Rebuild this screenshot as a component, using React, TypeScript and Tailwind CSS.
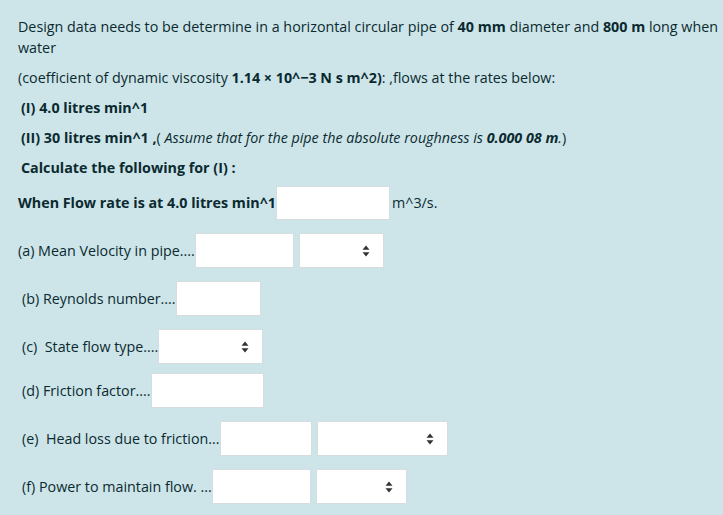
import React from "react";

function Arrows() {
  return (
    <svg width="8" height="12" viewBox="0 0 8 12" className="shrink-0">
      <path d="M4 0.5 L7.5 4.8 H0.5 Z" fill="#333" />
      <path d="M4 11.5 L7.5 7.2 H0.5 Z" fill="#333" />
    </svg>
  );
}

function Box({ w }: { w: number }) {
  return (
    <div
      className="h-[35px] bg-white border border-[#d6dde0] shrink-0"
      style={{ width: w }}
    />
  );
}

function Select({ w }: { w: number }) {
  return (
    <div
      className="h-[35px] bg-white border border-[#d6dde0] shrink-0 flex items-center justify-end pr-[13px]"
      style={{ width: w }}
    >
      <Arrows />
    </div>
  );
}

function Row({ children, mt = "mt-[13px]" }: { children: React.ReactNode; mt?: string }) {
  return <div className={`flex items-center ${mt}`}>{children}</div>;
}

export default function App() {
  return (
    <div
      className="w-[723px] h-[515px] overflow-hidden bg-[#cde5e9] text-[#0b2a30] text-[14.3px] pl-[18px] pt-[16px]"
      style={{ fontFamily: '"Open Sans", "Noto Sans", sans-serif' }}
    >
      <p className="leading-[21px] whitespace-nowrap">
        Design data needs to be determine in a horizontal circular pipe of <b>40 mm</b> diameter and{" "}
        <b>800 m</b> long when
        <br />
        water
      </p>
      <p className="leading-[21px] mt-[9px] whitespace-nowrap">
        (coefficient of dynamic viscosity <b>1.14 × 10^−3 N s m^2)</b>: ,flows at the rates below:
      </p>
      <p className="leading-[21px] mt-[9px] pl-[3px] font-bold">(I) 4.0 litres min^1</p>
      <p className="leading-[21px] mt-[9px] pl-[3px] whitespace-nowrap">
        <b>(II) 30 litres min^1 ,</b>(
        <i>
          {" "}Assume that for the pipe the absolute roughness is <b>0.000 08 m</b>.
        </i>
        )
      </p>
      <p className="leading-[21px] mt-[9px] pl-[3px] font-bold">Calculate the following for (I) :</p>

      <Row mt="mt-[8px]">
        <span className="font-bold">When Flow rate is at 4.0 litres min^1</span>
        <div className="h-[34px] w-[114px] bg-white border border-[#d6dde0] shrink-0" />
        <span className="ml-[2px]">m^3/s.</span>
      </Row>

      <Row>
        <span className="whitespace-pre">(a) Mean Velocity in pipe....</span>
        <Box w={99} />
        <div className="w-[5px]" />
        <Select w={85} />
      </Row>

      <Row>
        <span className="pl-[4px]">(b) Reynolds number....</span>
        <Box w={85} />
      </Row>

      <Row>
        <span className="pl-[4px] whitespace-pre">(c)  State flow type....</span>
        <Select w={105} />
      </Row>

      <Row mt="mt-[9px]">
        <span className="pl-[4px]">(d) Friction factor....</span>
        <Box w={113} />
      </Row>

      <Row>
        <span className="pl-[4px] whitespace-pre">(e)  Head loss due to friction...</span>
        <Box w={92} />
        <div className="w-[5px]" />
        <Select w={131} />
      </Row>

      <Row>
        <span className="pl-[4px]">(f) Power to maintain flow. ...</span>
        <Box w={99} />
        <div className="w-[5px]" />
        <Select w={91} />
      </Row>
    </div>
  );
}
